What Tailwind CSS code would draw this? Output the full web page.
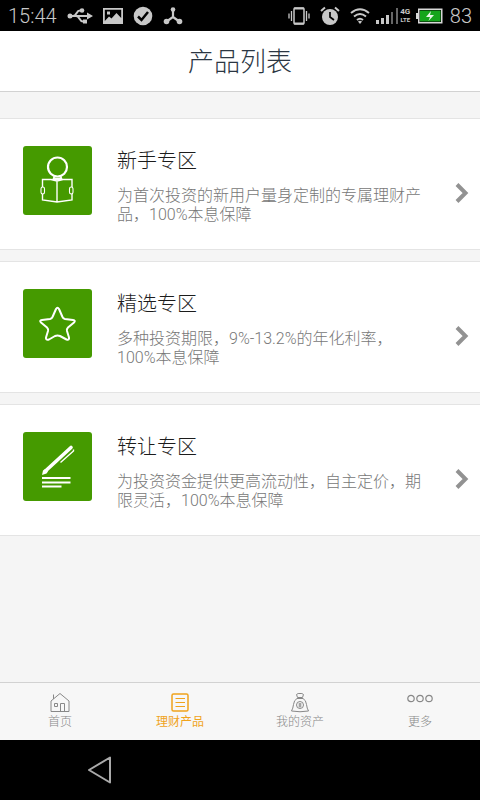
<!DOCTYPE html>
<html lang="zh-CN">
<head>
<meta charset="utf-8">
<meta name="viewport" content="width=device-width, initial-scale=1">
<title>产品列表</title>
<script src="https://cdn.jsdelivr.net/npm/@tailwindcss/browser@4"></script>
</head>
<body class="flex min-h-screen flex-col bg-[#f5f5f5] font-['Roboto','Noto_Sans_CJK_SC',sans-serif] font-light">

<!-- Status bar -->
<div class="flex h-[31px] items-center justify-between bg-black px-2 text-[#c8c8c8]">
  <div class="flex items-center gap-[10px]">
    <span class="text-[20px] leading-8">15:44</span>
    <svg class="h-5 w-[26px]" viewBox="0 0 26 20" fill="none" stroke="currentColor" stroke-width="2">
      <path d="M3 10H21M6 10C10 10 9 4.500 13 4.500H15M9 10C13 10 12 15.500 16 15.500H17"/>
      <circle cx="3" cy="10" r="2.500" fill="currentColor" stroke="none"/>
      <circle cx="15" cy="4.500" r="2.300" fill="currentColor" stroke="none"/>
      <path d="M16 13.500h4v4h-4zM20 6.500L26 10L20 13.500z" fill="currentColor" stroke="none"/>
    </svg>
    <svg class="h-4 w-5" viewBox="0 0 20 16">
      <path fill="currentColor" fill-rule="evenodd" d="M0 0H20V16H0ZM1.800 1.800V13L6 8.500L8.500 10.500L13.500 5L18.200 10V1.800ZM4 3.500H7V6.500H4Z"/>
    </svg>
    <svg class="h-5 w-5" viewBox="0 0 20 20"><circle cx="10" cy="10" r="9.300" fill="currentColor"/><path d="M5 10.500L8.500 14L15 6" fill="none" stroke="#000" stroke-width="2.500"/></svg>
    <svg class="h-5 w-5" viewBox="0 0 20 20" fill="none" stroke="currentColor" stroke-width="2.200">
      <path d="M10 3V11L3 16M10 11L17 16"/>
      <g fill="currentColor" stroke="none"><circle cx="10" cy="3.500" r="2.300"/><circle cx="3.500" cy="15.500" r="2.800"/><circle cx="16.500" cy="15.500" r="2.800"/></g>
    </svg>
  </div>
  <div class="flex items-center">
    <svg class="mr-[10px] h-5 w-[22px]" viewBox="0 0 22 20" fill="none" stroke="currentColor">
      <rect x="6" y="2" width="10" height="16" rx="1" stroke-width="1.500"/><path d="M6 2.500H16M6 17.500H16" stroke-width="2"/>
      <path d="M3.500 5V15M18.500 5V15M1 7.500V12.500M21 7.500V12.500" stroke-width="1.300"/>
    </svg>
    <svg class="mr-[10px] h-5 w-5" viewBox="0 0 20 20" fill="none">
      <circle cx="10" cy="11" r="8" fill="currentColor"/><path d="M1 5L5 1.500M19 5L15 1.500" stroke="currentColor" stroke-width="2"/><path d="M10 6V11L14 14" stroke="#000" stroke-width="1.700"/>
    </svg>
    <svg class="mr-[6px] h-5 w-5" viewBox="0 0 20 20" fill="none" stroke="currentColor" stroke-width="2">
      <path d="M1 7Q10 -0.500 19 7M4 10.500Q10 5.500 16 10.500M7 14Q10 11.500 13 14"/><path d="M8 15.500Q10 14 12 15.500L10 18z" fill="currentColor" stroke="none"/>
    </svg>
    <svg class="mr-[2px] h-4 w-[22px]" viewBox="0 0 22 16" fill="currentColor">
      <path d="M0 12h3v4H0zM5 10h3v6H5zM10 7h3v9h-3z"/><path d="M15 4h2v12h-2zM20 0h2v16h-2z" fill="#666"/>
    </svg>
    <div class="mr-[5px] flex w-[11px] flex-col items-center font-bold"><span class="text-[8px] leading-[8px]">4G</span><span class="text-[6px] leading-[7px]">LTE</span></div>
    <svg class="mr-[7px] h-4 w-[27px]" viewBox="0 0 27 16">
      <path d="M0 5H2V0.500H26.500V15.500H2V11H0z" fill="#d8d8d8"/><path d="M3.500 2H25V14H3.500z" fill="#000"/><path d="M4 2.500H24.500V13.500H4z" fill="#15a51b"/><path d="M15 3L10 9H14L12.500 13L18 7H14z" fill="#e6f5e6"/>
    </svg>
    <span class="text-[20px] leading-8">83</span>
  </div>
</div>

<header class="flex h-[61px] items-center justify-center border-b border-[#d2d2d2] bg-white">
  <h1 class="pt-[2px] text-[26px] leading-9 text-[#2b3642]">产品列表</h1>
</header>

<main class="mt-[26px] mb-4 flex flex-1 flex-col gap-[11px]">
  <a href="#new" class="flex border-y border-[#e4e4e4] bg-white pt-[27px] pb-[25px] pr-[10px] pl-[23px]">
    <svg class="h-[69px] w-[69px] shrink-0 rounded-[3px] bg-[#459a00]" viewBox="0 0 69 69" fill="none" stroke="#fff">
      <circle cx="34.500" cy="21" r="9.500" stroke-width="2.200"/>
      <path d="M30.500 30.500L29 34H40L38.500 30.500Q34.500 33 30.500 30.500Z" fill="#fff" stroke="none"/>
      <path d="M19.500 33.500L28 33.500L34 35L40 33.500L49 33.500V54L34 56L19.500 54ZM34 35V56" stroke-width="1.400"/>
      <rect x="18" y="41" width="3.500" height="7" rx="1.700" stroke-width="1.100" fill="#459a00"/><rect x="46.500" y="41" width="3.500" height="7" rx="1.700" stroke-width="1.100" fill="#459a00"/>
    </svg>
    <div class="ml-[25px] flex-1">
      <h2 class="text-[20px] leading-[30px] text-[#1c1c1c]">新手专区</h2>
      <p class="mt-[10px] text-[16px] leading-[19px] text-[#777]">为首次投资的新用户量身定制的专属理财产品，100%本息保障</p>
    </div>
    <svg class="mt-[37px] ml-[24px] h-5 w-4 shrink-0" viewBox="0 0 16 20" fill="none" stroke="#929292" stroke-width="4"><path d="M3 1.500L11.500 10L3 18.500"/></svg>
  </a>

  <a href="#selected" class="flex border-y border-[#e4e4e4] bg-white pt-[27px] pb-[25px] pr-[10px] pl-[23px]">
    <svg class="h-[69px] w-[69px] shrink-0 rounded-[3px] bg-[#459a00]" viewBox="0 0 69 69" fill="none" stroke="#fff">
      <path stroke-width="2" stroke-linejoin="round" d="M33 20Q34.500 17.500 36 20L39.500 28Q40 29.500 42 30L50 31Q53 31.500 51 33.500L45 38.500Q43.500 40 44 42L46 48.500Q46.500 51.500 43.500 50.500L37 47Q34.500 46 32 47L26 50.500Q22.500 51.500 23 48.500L25 42Q25.500 40 24 38.500L18 33.500Q16 31.500 19 31L27 30Q29 29.500 29.500 28Z"/>
    </svg>
    <div class="ml-[25px] flex-1">
      <h2 class="text-[20px] leading-[30px] text-[#1c1c1c]">精选专区</h2>
      <p class="mt-[10px] text-[16px] leading-[19px] text-[#777]">多种投资期限，9%-13.2%的年化利率，100%本息保障</p>
    </div>
    <svg class="mt-[37px] ml-[24px] h-5 w-4 shrink-0" viewBox="0 0 16 20" fill="none" stroke="#929292" stroke-width="4"><path d="M3 1.500L11.500 10L3 18.500"/></svg>
  </a>

  <a href="#transfer" class="flex border-y border-[#e4e4e4] bg-white pt-[27px] pb-[25px] pr-[10px] pl-[23px]">
    <svg class="h-[69px] w-[69px] shrink-0 rounded-[3px] bg-[#459a00]" viewBox="0 0 69 69" fill="none" stroke="#fff">
      <path d="M23 38.500L48 15.500" stroke-width="3.600" stroke-linecap="round"/>
      <path d="M19 43L20 38.500L22 37L25 39.500L23.500 41.500Z" fill="#fff" stroke="none"/>
      <path d="M50.500 17.500V19L37.500 30.500" stroke-width="1.400"/>
      <path d="M19 46H47.500M19 50.500H47.500M19 54.500H38.500" stroke-width="1.800"/>
    </svg>
    <div class="ml-[25px] flex-1">
      <h2 class="text-[20px] leading-[30px] text-[#1c1c1c]">转让专区</h2>
      <p class="mt-[10px] text-[16px] leading-[19px] text-[#777]">为投资资金提供更高流动性，自主定价，期限灵活，100%本息保障</p>
    </div>
    <svg class="mt-[37px] ml-[24px] h-5 w-4 shrink-0" viewBox="0 0 16 20" fill="none" stroke="#929292" stroke-width="4"><path d="M3 1.500L11.500 10L3 18.500"/></svg>
  </a>
</main>

<nav class="grid grid-cols-4 border-t border-[#d2d2d2] bg-[#f7f7f7] pt-[10px] pb-[9px] text-[12px] leading-[18px] text-[#888]">
  <a href="#home" class="flex flex-col items-center">
    <svg class="h-5 w-5" viewBox="0 0 20 20" fill="none" stroke="currentColor" stroke-width="1"><path d="M1 18.500V8L10 0.500L19 8V18.500ZM3.500 6V1.500M10.500 18.500V10.500H14.500V18.500M4.500 10.500h3v3h-3z"/></svg>
    <span>首页</span>
  </a>
  <a href="#products" class="flex flex-col items-center text-[#f0a31c]" aria-current="page">
    <svg class="h-5 w-5" viewBox="0 0 20 20" fill="none" stroke="currentColor" stroke-width="1.500"><rect x="2" y="1" width="16" height="17" rx="1.500"/><path d="M5.500 5.500H15M5.500 9.500H15M5.500 13.500H15" stroke-width="1.200"/></svg>
    <span class="font-normal">理财产品</span>
  </a>
  <a href="#assets" class="flex flex-col items-center">
    <svg class="h-5 w-5" viewBox="0 0 20 20" fill="none" stroke="currentColor" stroke-width="1"><path d="M7.500 4.500L6.500 1.500Q8 0 10 0.500Q12 0 13.500 1.500L12.500 4.500ZM7 5.500H13Q16 7 16.500 11.500Q17 15.500 18.500 18Q10 19.500 1.500 18Q3 15.500 3.500 11.500Q4 7 7 5.500Z"/><circle cx="10" cy="12" r="3.500"/><path d="M10 10V14.500M8.500 11H11.500M8.500 13H11.500"/></svg>
    <span>我的资产</span>
  </a>
  <a href="#more" class="flex flex-col items-center">
    <svg class="h-5 w-[26px]" viewBox="0 0 26 20" fill="none" stroke="currentColor" stroke-width="1.200"><circle cx="4" cy="5.500" r="3.200"/><circle cx="13" cy="5.500" r="3.200"/><circle cx="22" cy="5.500" r="3.200"/></svg>
    <span>更多</span>
  </a>
</nav>

<div class="flex h-[60px] items-center bg-black pl-[87px]">
  <button type="button" aria-label="返回">
    <svg class="h-7 w-[25px]" viewBox="0 0 25 28" fill="none" stroke="#aaa" stroke-width="2" stroke-linejoin="round"><path d="M2 14L23 1.500V26.500Z"/></svg>
  </button>
</div>
</body>
</html>
